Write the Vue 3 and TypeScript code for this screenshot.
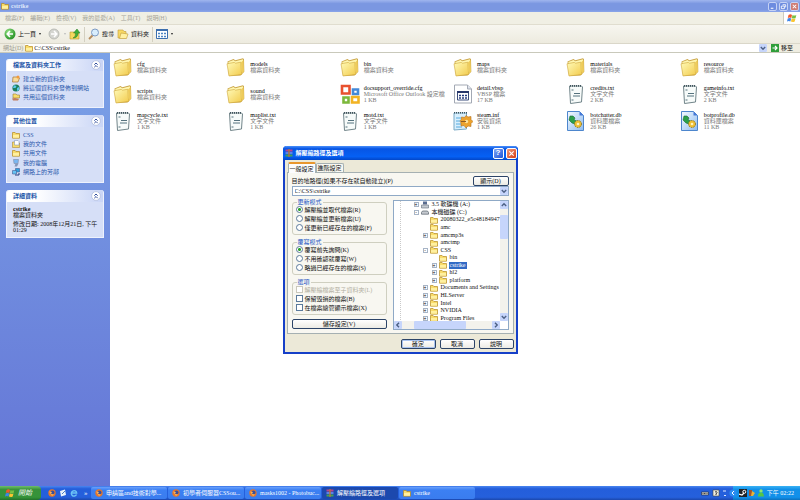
<script setup lang="ts">
import { ref } from 'vue'

interface FileEntry { name: string; kind: string; size?: string; icon: string }
interface TreeNode { name: string; depth: number; icon: string; sign?: '+' | '-' }

const menus = ['檔案(F)', '編輯(E)', '檢視(V)', '我的最愛(A)', '工具(T)', '說明(H)']

const folderTasks = [
  { label: '建立新的資料夾', icon: 'new-folder' },
  { label: '將這個資料夾發佈到網站', icon: 'globe' },
  { label: '共用這個資料夾', icon: 'share' },
]
const places = [
  { label: 'CSS', icon: 'folder' },
  { label: '我的文件', icon: 'docs' },
  { label: '共用文件', icon: 'folder' },
  { label: '我的電腦', icon: 'pc' },
  { label: '網路上的芳鄰', icon: 'network' },
]

const dir = (name: string): FileEntry => ({ name, kind: '檔案資料夾', icon: 'folder-big' })
const txt = (name: string, size: string): FileEntry => ({ name, kind: '文字文件', size, icon: 'text' })

const files: FileEntry[] = [
  dir('cfg'), dir('models'), dir('bin'), dir('maps'), dir('materials'), dir('resource'),
  dir('scripts'), dir('sound'),
  { name: 'docsupport_override.cfg', kind: 'Microsoft Office Outlook 設定檔', size: '1 KB', icon: 'office' },
  { name: 'detail.vbsp', kind: 'VBSP 檔案', size: '17 KB', icon: 'vbsp' },
  txt('credits.txt', '2 KB'), txt('gameinfo.txt', '2 KB'),
  txt('mapcycle.txt', '1 KB'), txt('maplist.txt', '1 KB'), txt('motd.txt', '1 KB'),
  { name: 'steam.inf', kind: '安裝資訊', size: '1 KB', icon: 'inf' },
  { name: 'botchatter.db', kind: '資料庫檔案', size: '26 KB', icon: 'db' },
  { name: 'botprofile.db', kind: '資料庫檔案', size: '11 KB', icon: 'db' },
]

const tree: TreeNode[] = [
  { name: '3.5 軟碟機 (A:)', depth: 0, icon: 'floppy', sign: '+' },
  { name: '本機磁碟 (C:)', depth: 0, icon: 'disk', sign: '-' },
  { name: '20080322_e5c48184947', depth: 1, icon: 'folder' },
  { name: 'amc', depth: 1, icon: 'folder' },
  { name: 'amcmp3s', depth: 1, icon: 'folder', sign: '+' },
  { name: 'amctmp', depth: 1, icon: 'folder' },
  { name: 'CSS', depth: 1, icon: 'folder', sign: '-' },
  { name: 'bin', depth: 2, icon: 'folder' },
  { name: 'cstrike', depth: 2, icon: 'folder', sign: '+' },
  { name: 'hl2', depth: 2, icon: 'folder', sign: '+' },
  { name: 'platform', depth: 2, icon: 'folder', sign: '+' },
  { name: 'Documents and Settings', depth: 1, icon: 'folder', sign: '+' },
  { name: 'HLServer', depth: 1, icon: 'folder', sign: '+' },
  { name: 'Intel', depth: 1, icon: 'folder', sign: '+' },
  { name: 'NVIDIA', depth: 1, icon: 'folder', sign: '+' },
  { name: 'Program Files', depth: 1, icon: 'folder', sign: '+' },
]

const updateModes = ['解壓縮並取代檔案(R)', '解壓縮並更新檔案(U)', '僅更新已經存在的檔案(F)']
const overwriteModes = ['覆寫前先詢問(K)', '不用確認就覆寫(W)', '略過已經存在的檔案(S)']
const options = ref([
  { label: '解壓縮檔案至子資料夾(L)', disabled: true, on: false },
  { label: '保留毀損的檔案(B)', disabled: false, on: false },
  { label: '在檔案總管顯示檔案(X)', disabled: false, on: false },
])
const updateMode = ref(0)
const overwriteMode = ref(0)
const path = ref('C:\\CSS\\cstrike')
const selected = ref('cstrike')

const tasks = [
  { label: '申請區and技術對學...', icon: 'firefox' },
  { label: '初學者伺服器CSSou...', icon: 'firefox' },
  { label: 'masks1002 - Photobuc...', icon: 'firefox' },
  { label: '解壓縮路徑及選項', icon: 'rar', active: true },
  { label: 'cstrike', icon: 'folder' },
]
</script>

<template>
  <div class="desktop">
    <svg class="defs" aria-hidden="true">
      <defs>
        <linearGradient id="gy" x1="0" y1="0" x2="1" y2="1">
          <stop offset="0" stop-color="#fffab8" /><stop offset="1" stop-color="#f2cb4c" />
        </linearGradient>
        <linearGradient id="gb" x1="0" y1="0" x2="1" y2="1">
          <stop offset="0" stop-color="#f4faff" /><stop offset="1" stop-color="#8fbcf0" />
        </linearGradient>
        <radialGradient id="gg" cx=".35" cy=".3" r=".8">
          <stop offset="0" stop-color="#8fe07f" /><stop offset="1" stop-color="#1d8a1d" />
        </radialGradient>
      </defs>
      <symbol id="folder-big" viewBox="0 0 20 20">
        <path d="M1.500 4.500 7.500 2l1.800 1.300L17 1.200l1 1 .3 12.500-3.800 3.800-11.500.5z" fill="#caa548" />
        <path d="M2.300 5 7.500 3l1.800 1.300L17 2.300l.4 12-13 3.200z" fill="#fff6b0" />
        <path d="M1 6.800 8.300 5.400l1.200.8 5.300-1 .8 12.300L3 19z" fill="url(#gy)" stroke="#cfa63a" stroke-width=".6" />
        <path d="m15 5.500 2.500-2.500.4 11.500-2.300 2.800z" fill="#eecb5a" />
      </symbol>
      <symbol id="folder" viewBox="0 0 8 8">
        <path d="M.5 1.500h2.600l.8 1h3.600v4.700h-7z" fill="#f9dc6a" stroke="#b58a22" stroke-width=".7" />
        <path d="M1 4h6v2.700H1z" fill="#fff0a0" />
      </symbol>
      <symbol id="new-folder" viewBox="0 0 8 8">
        <path d="M1 2h5l1.500 1L6 7H.5z" fill="#f9dc9a" stroke="#a87532" stroke-width=".7" />
        <circle cx="6" cy="2" r="1.500" fill="#f29a3c" />
      </symbol>
      <symbol id="globe" viewBox="0 0 8 8">
        <circle cx="4" cy="4" r="3.600" fill="#1d7f5d" />
        <path d="M2 1.200 4.500 2 3.500 4 1 4zM5 4l2-1v3l-2 1z" fill="#5bc8ee" />
      </symbol>
      <symbol id="share" viewBox="0 0 8 8">
        <path d="M1 1h3l1 1h2.500v3H1z" fill="#f9dc6a" stroke="#9b7d34" stroke-width=".6" />
        <path d="M0 5.500 3 5l4 1-1 1.500H1z" fill="#c27d5c" />
      </symbol>
      <symbol id="docs" viewBox="0 0 8 8">
        <path d="M.5 2h2.600l.8 1h3.600v4.500h-7z" fill="#f9dc6a" stroke="#a98938" stroke-width=".6" />
        <path d="M2.500.5H6l1 1V5H2.500z" fill="#fff" stroke="#738bb0" stroke-width=".5" />
      </symbol>
      <symbol id="pc" viewBox="0 0 8 8">
        <path d="M1.500.5h5l-.5 4H2z" fill="#79b7f3" stroke="#8693ae" stroke-width=".7" />
        <path d="M3.500 4.500h3L5 7.500H2.500z" fill="#8497ba" />
      </symbol>
      <symbol id="network" viewBox="0 0 8 8">
        <path d="M3.500.5h4v3.500h-4z" fill="#2fa1dd" stroke="#435a96" stroke-width=".6" />
        <path d="M.5 2.500h4V6h-4z" fill="#66c3f3" stroke="#435a96" stroke-width=".6" />
        <path d="M3 7h4V5" fill="none" stroke="#223a7c" />
      </symbol>
      <symbol id="text" viewBox="0 0 20 20">
        <path d="M3.500 2h12l1 1-1 15-11 1.500z" fill="#f7fbfa" stroke="#72858a" stroke-width="1" />
        <path d="M4 1.800h12" stroke="#40545c" stroke-width="1.800" stroke-dasharray="1 1" />
        <path d="M5.500 6h2M8 9.500h6M7 12h7M5.500 16h2" stroke="#55727e" />
      </symbol>
      <symbol id="office" viewBox="0 0 20 20">
        <g fill="none" stroke-width="2.600">
          <path d="M2 2h7.500v7.500H2z" stroke="#e8512f" /><path d="M13 5.500h5v4.500h-5z" stroke="#4489d8" />
          <path d="M3.500 13.500h5v5h-5z" stroke="#7cb83b" /><path d="M12 13h6.500v5.500H12z" stroke="#f2b322" />
        </g>
      </symbol>
      <symbol id="vbsp" viewBox="0 0 20 20">
        <path d="M1.500 1h13l4 4v14h-17z" fill="#fff" stroke="#a3a9b4" />
        <path d="M14.500 1v4h4" fill="#dfe3ed" stroke="#a3a9b4" />
        <path d="M4.500 7.500h11v8.500h-11z" fill="#fff" stroke="#3a4d7c" />
        <path d="M4 8h12" stroke="#27376b" stroke-width="2" />
        <path d="M6 11.500h8M6 14h8" stroke="#263c80" stroke-width="1.600" stroke-dasharray="2 1" />
      </symbol>
      <symbol id="inf" viewBox="0 0 20 20">
        <path d="M1 2h12.500v16L1 19z" fill="#d8effd" stroke="#78a9c6" />
        <path d="M1 1.800h13" stroke="#40545c" stroke-width="1.600" stroke-dasharray="1 1" />
        <path d="M3 7h5M3 10h4M3 13h5M3 16h6" stroke="#56aade" />
        <path d="m13 4.500 2 1.500 3-.5v3l2 2-2 2v3l-3-.5-2 2-2-2.500-3 .5v-3l-1-2 1.500-2V6l3 .5z" fill="#eda32d" stroke="#b27122" stroke-width=".6" />
        <circle cx="13.500" cy="10.500" r="1.700" fill="#fbe2a0" /><path d="M8 10.500h5" stroke="#8c5a23" />
      </symbol>
      <symbol id="db" viewBox="0 0 20 20">
        <path d="M1.500.5h12l4 4v15h-16z" fill="url(#gb)" stroke="#4d86cd" />
        <path d="M13.500.5v4h4" fill="#4679d8" />
        <path d="m4 5 3 0 2 2-1 2 3 1-2 3-3-1-3-3z" fill="#2ba04a" stroke="#1b6d34" stroke-width=".6" />
        <circle cx="12" cy="13" r="3.500" fill="#eebf35" stroke="#8c781f" stroke-dasharray="1.500 1" />
        <circle cx="12" cy="13" r="1.300" fill="#fff4c0" />
      </symbol>
      <symbol id="floppy" viewBox="0 0 8 8">
        <path d="M2 .5h4v3H2z" fill="#5a6c8f" /><path d="M.5 4h7v3h-7z" fill="#c3c9d0" stroke="#626d78" stroke-width=".6" />
      </symbol>
      <symbol id="disk" viewBox="0 0 8 8">
        <path d="M1.500 3h5l1 1.500v1.700h-7V4.500z" fill="#c5c9cf" stroke="#555e68" stroke-width=".7" />
      </symbol>
      <symbol id="firefox" viewBox="0 0 8 8">
        <circle cx="4" cy="4" r="3.700" fill="#e5762b" /><circle cx="4.500" cy="3.500" r="2" fill="#39509c" />
        <path d="M1 2.500 4 3 3 5l3 .5-2 1.500z" fill="#f7b25c" />
      </symbol>
      <symbol id="rar" viewBox="0 0 8 8">
        <path d="M.5.500h7v2h-7z" fill="#b8458f" /><path d="M.5 3h7v2h-7z" fill="#5b82e6" />
        <path d="M.5 5.500h7v2h-7z" fill="#46a052" /><path d="M3.300 0h1.400v8H3.300z" fill="#b0763c" />
      </symbol>
      <symbol id="flag" viewBox="0 0 10 10">
        <path d="M1.500 2Q3.500.7 5 2L4.300 5Q2.500 4 .8 5z" fill="#f0582c" /><path d="M5.500 2Q7.500 3 9.300 2L8.600 5Q6.700 6 4.800 5z" fill="#78c043" />
        <path d="M.7 5.500Q2.500 4.500 4.200 5.500L3.400 8.500Q1.700 7.500 0 8.500z" fill="#3f86e8" /><path d="M4.700 5.600Q6.700 6.500 8.500 5.500L7.700 8.500Q6 9.500 3.900 8.600z" fill="#fac531" />
      </symbol>
      <symbol id="chevrons" viewBox="0 0 10 10">
        <circle cx="5" cy="5" r="4.400" fill="#fff" stroke="#b3bfdd" stroke-width=".8" />
        <path d="M3.300 4.700 5 3l1.700 1.700M3.300 7.200 5 5.500l1.700 1.700" fill="none" stroke="#324f9c" />
      </symbol>
      <symbol id="down" viewBox="0 0 8 8">
        <path d="m1.800 3 2.200 2.200L6.200 3" fill="none" stroke="#4d6185" stroke-width="1.400" />
      </symbol>
    </svg>

    <header class="titlebar">
      <svg class="ic8"><use href="#folder" /></svg>
      <span class="grow">cstrike</span>
      <button class="cap" aria-label="最小化"><svg viewBox="0 0 8 8"><path d="M2 6h3" stroke="#fff" stroke-width="1.200" /></svg></button>
      <button class="cap" aria-label="還原"><svg viewBox="0 0 8 8"><path d="M3 2h3.500v3M1.500 3.500H5v3H1.500z" fill="none" stroke="#fff" /></svg></button>
      <button class="cap close" aria-label="關閉"><svg viewBox="0 0 8 8"><path d="m2 2 4 4M6 2 2 6" stroke="#fff" stroke-width="1.200" /></svg></button>
    </header>

    <nav class="menubar">
      <button v-for="m in menus" :key="m">{{ m }}</button>
      <span class="brand"><svg class="ic10"><use href="#flag" /></svg></span>
    </nav>

    <div class="toolbar">
      <button>
        <svg class="ic12" viewBox="0 0 12 12"><circle cx="6" cy="6" r="5.500" fill="url(#gg)" /><path d="M9 6H3.500M6 3 3.200 6 6 9" fill="none" stroke="#fff" stroke-width="1.600" /></svg>
        上一頁<i class="tri"></i>
      </button>
      <button aria-label="下一頁" class="fwd">
        <svg class="ic12" viewBox="0 0 12 12"><circle cx="6" cy="6" r="5" fill="#d4d5d0" stroke="#a9aba5" stroke-width=".7" /><path d="M3 6h5.500M6 3l2.800 3L6 9" fill="none" stroke="#fff" stroke-width="1.500" /></svg>
        <i class="tri faint"></i>
      </button>
      <button aria-label="往上">
        <svg class="ic12" viewBox="0 0 12 12"><path d="M1 4h4l1 1h4v6H1z" fill="#f6d75e" stroke="#b99a35" stroke-width=".6" /><path d="M4 10q3-1 2.500-5H4.500L8 1l3 4H9q0 5-5 5z" fill="#3fae38" stroke="#237a20" stroke-width=".5" /></svg>
      </button>
      <span class="vsep"></span>
      <button>
        <svg class="ic12" viewBox="0 0 12 12"><path d="m1 11 4-4" stroke="#b58b5b" stroke-width="1.800" /><circle cx="7" cy="4.500" r="3.500" fill="#d8edfc" stroke="#7d9bc4" /></svg>
        搜尋
      </button>
      <button>
        <svg class="ic12" viewBox="0 0 12 12"><path d="M1 2h5l1 1.500h2V10H1z" fill="#f8d964" stroke="#c09a38" stroke-width=".6" /><path d="m4 5 7 1-1.500 4.500H2.500z" fill="#fff0a2" stroke="#c09a38" stroke-width=".6" /></svg>
        資料夾
      </button>
      <span class="vsep"></span>
      <button aria-label="檢視">
        <svg class="ic12" viewBox="0 0 12 12"><path d="M.5 1.500h11v9H.5z" fill="#fff" stroke="#3c6fae" /><path d="M0 2h12" stroke="#3c6fae" stroke-width="2" /><path d="M2 5.500h8M2 8.500h8" stroke="#4e86c4" stroke-width="1.600" stroke-dasharray="2 1" /></svg>
        <i class="tri"></i>
      </button>
    </div>

    <div class="address">
      <label for="addr">網址(D)</label>
      <div class="addr-box">
        <svg class="ic8"><use href="#folder" /></svg>
        <input id="addr" type="text" value="C:\CSS\cstrike" />
        <button class="drop" aria-label="展開"><svg class="ic8"><use href="#down" /></svg></button>
      </div>
      <button class="go">
        <svg class="ic8" viewBox="0 0 8 8"><path d="M0 0h8v8H0z" fill="#2f9e3a" /><path d="M1.500 4h4M4 2l2 2-2 2" fill="none" stroke="#fff" stroke-width="1.200" /></svg>
        移至
      </button>
    </div>

    <main class="body">
      <aside class="side">
        <section class="panel">
          <h2>檔案及資料夾工作<svg class="ic10"><use href="#chevrons" /></svg></h2>
          <ul class="links three">
            <li v-for="t in folderTasks" :key="t.label"><svg class="ic8"><use :href="'#' + t.icon" /></svg><a href="#">{{ t.label }}</a></li>
          </ul>
        </section>
        <section class="panel">
          <h2>其他位置<svg class="ic10"><use href="#chevrons" /></svg></h2>
          <ul class="links five">
            <li v-for="t in places" :key="t.label"><svg class="ic8"><use :href="'#' + t.icon" /></svg><a href="#">{{ t.label }}</a></li>
          </ul>
        </section>
        <section class="panel">
          <h2>詳細資料<svg class="ic10"><use href="#chevrons" /></svg></h2>
          <div class="details">
            <p><b>cstrike</b><br />檔案資料夾</p>
            <p>修改日期: 2008年12月21日, 下午 01:29</p>
          </div>
        </section>
      </aside>

      <ul class="files">
        <li v-for="f in files" :key="f.name">
          <svg class="ic20"><use :href="'#' + f.icon" /></svg>
          <div>
            <div class="name">{{ f.name }}</div>
            <div>{{ f.kind }}</div>
            <div v-if="f.size">{{ f.size }}</div>
          </div>
        </li>
      </ul>
    </main>

    <footer class="taskbar">
      <button class="start"><svg class="ic10"><use href="#flag" /></svg>開始</button>
      <div class="quick">
        <svg class="ic8"><use href="#firefox" /></svg>
        <svg class="ic8" viewBox="0 0 8 8"><path d="M1 2 6 .5 7 6 2 7.500z" fill="#e9f2fb" /><path d="m3 5 3-3" stroke="#4c80c0" /></svg>
        <svg class="ic8" viewBox="0 0 8 8"><path d="M6.500 5.500A2.700 2.700 0 1 1 6.700 4H2" fill="none" stroke="#6cc4f6" stroke-width="1.400" /></svg>
        <span class="more">»</span>
      </div>
      <div class="tasks">
        <button v-for="t in tasks" :key="t.label" :class="{ active: t.active }">
          <svg class="ic8"><use :href="'#' + t.icon" /></svg><span>{{ t.label }}</span>
        </button>
      </div>
      <div class="lang">
        <svg class="ic8" viewBox="0 0 8 8"><path d="M.5 3h7v3h-7z" fill="#d7d3c4" stroke="#20305a" stroke-width=".7" /><path d="M1.500 4.500h5" stroke="#444" stroke-dasharray="1 .5" /></svg>
        <svg class="ic8" viewBox="0 0 8 8"><path d="M1 1h6v6H1z" fill="#f1efe2" stroke="#444" stroke-width=".6" /><path d="M3 3q2-1 2 .5L4 5v1" fill="none" stroke="#333" /></svg>
        <svg class="ic4" viewBox="0 0 4 8"><path d="M0 2h3M1 6l1 1 1-1" fill="none" stroke="#dce8ff" /></svg>
      </div>
      <div class="tray">
        <svg class="ic8 hide" viewBox="0 0 8 8"><circle cx="4" cy="4" r="3.600" fill="#2b8cf0" /><path d="M5 2 3 4l2 2" fill="none" stroke="#fff" /></svg>
        <svg class="ic8" viewBox="0 0 8 8"><path d="M0 0h8v8H0z" fill="#202327" /><circle cx="5.300" cy="2.800" r="1.500" fill="none" stroke="#fff" /><path d="m0 5 3 1 2-2" fill="none" stroke="#fff" stroke-width="1.200" /></svg>
        <svg class="ic8" viewBox="0 0 8 8"><path d="M1 1h3v6H1z" fill="#a4532c" /><path d="m4 2 3 2-2 3H3z" fill="#e5b43a" /></svg>
        <svg class="ic8" viewBox="0 0 8 8"><circle cx="4" cy="2" r="1.700" fill="#8fe36e" /><path d="M1 7.500q0-4 3-4t3 4z" fill="#54c546" /></svg>
        <time>下午 02:22</time>
      </div>
    </footer>

    <div class="overlay">
      <form class="dialog" role="dialog" aria-labelledby="dlg-title" @submit.prevent>
        <div class="dlg-title">
          <svg class="ic8"><use href="#rar" /></svg>
          <span id="dlg-title" class="grow">解壓縮路徑及選項</span>
          <button type="button" class="cap big" aria-label="求助">?</button>
          <button type="button" class="cap big close" aria-label="關閉"><svg viewBox="0 0 8 8"><path d="m1.500 1.500 5 5M6.500 1.500l-5 5" stroke="#fff" stroke-width="1.300" /></svg></button>
        </div>
        <div class="dlg-body">
          <div class="tabs" role="tablist">
            <button type="button" role="tab" class="on">一般設定</button>
            <button type="button" role="tab">進階設定</button>
          </div>
          <div class="page">
            <div class="path-row">
              <label for="dest">目的地路徑(如果不存在就自動建立)(P)</label>
              <button type="button" class="btn">顯示(D)</button>
            </div>
            <div class="combo">
              <input id="dest" v-model="path" type="text" />
              <button type="button" class="drop" aria-label="展開"><svg class="ic8"><use href="#down" /></svg></button>
            </div>
            <div class="cols">
              <div class="left">
                <fieldset>
                  <legend>更新模式</legend>
                  <label v-for="(m, i) in updateModes" :key="m"><input v-model="updateMode" type="radio" name="update" :value="i" />{{ m }}</label>
                </fieldset>
                <fieldset>
                  <legend>覆寫模式</legend>
                  <label v-for="(m, i) in overwriteModes" :key="m"><input v-model="overwriteMode" type="radio" name="overwrite" :value="i" />{{ m }}</label>
                </fieldset>
                <fieldset>
                  <legend>選項</legend>
                  <label v-for="o in options" :key="o.label" :class="{ off: o.disabled }"><input v-model="o.on" type="checkbox" :disabled="o.disabled" />{{ o.label }}</label>
                </fieldset>
                <button type="button" class="btn">儲存設定(V)</button>
              </div>
              <div class="tree-box">
                <div class="tree-view">
                  <ul class="tree">
                    <li v-for="n in tree" :key="n.name" :class="'d' + n.depth">
                      <span class="sign" :class="{ box: n.sign }">{{ n.sign }}</span>
                      <svg class="ic8"><use :href="'#' + n.icon" /></svg>
                      <span class="node" :class="{ sel: n.name === selected }" @click="selected = n.name">{{ n.name }}</span>
                    </li>
                  </ul>
                </div>
                <div class="vbar">
                  <button type="button" class="drop" aria-label="向上"><svg class="ic8 up"><use href="#down" /></svg></button>
                  <span class="thumb"></span>
                  <button type="button" class="drop" aria-label="向下"><svg class="ic8"><use href="#down" /></svg></button>
                </div>
                <div class="hbar">
                  <button type="button" class="drop" aria-label="向左"><svg class="ic8 lf"><use href="#down" /></svg></button>
                  <span class="thumb"></span>
                  <button type="button" class="drop" aria-label="向右"><svg class="ic8 rt"><use href="#down" /></svg></button>
                </div>
              </div>
            </div>
          </div>
          <div class="actions">
            <button type="submit" class="btn default">確定</button>
            <button type="button" class="btn">取消</button>
            <button type="button" class="btn">說明</button>
          </div>
        </div>
      </form>
    </div>
  </div>
</template>

<style>
body { margin: 0; }
</style>

<style scoped>
.desktop {
  position: relative;
  display: flex;
  flex-direction: column;
  min-height: 100vh;
  background: #fff;
  color: #111;
  font: 6px/6px "Liberation Serif", "Noto Sans CJK TC", serif;
}
.desktop *, .desktop { box-sizing: border-box; }
.defs { position: absolute; width: 0; height: 0; }
svg { display: block; flex: none; }
.ic4 { width: 4px; height: 8px; }
.ic8 { width: 8px; height: 8px; }
.ic10 { width: 10px; height: 10px; }
.ic12 { width: 12px; height: 12px; }
.ic20 { width: 20px; height: 20px; }
button, input { font: inherit; color: inherit; margin: 0; padding: 0; border: 0; background: none; }
button { display: flex; align-items: center; white-space: nowrap; }
input[type="text"] { flex: 1; min-width: 0; height: 8px; outline: 0; }
ul, p, h2, fieldset { margin: 0; padding: 0; list-style: none; }
a { color: inherit; text-decoration: none; }
.grow { flex: 1; }

.titlebar {
  display: flex;
  align-items: center;
  gap: 2px;
  height: 12px;
  padding: 0 1px;
  background: linear-gradient(#a0b6ee, #7b97e1 30%, #7b97e1 80%, #8ba6ea);
  color: #dfe7fb;
  font-weight: bold;
}
.cap {
  justify-content: center;
  width: 9px;
  height: 9px;
  border: 1px solid #c5d2f5;
  border-radius: 2px;
  background: #6d8ce0;
  color: #fff;
  font: bold 8px/8px "Liberation Sans", sans-serif;
}
.cap svg { width: 7px; height: 7px; }
.cap.close { background: #cf7c74; }
.cap.big { width: 11px; height: 11px; border-color: #fff; background: linear-gradient(135deg, #7fa4f5, #1f56d8); }
.cap.big.close { background: linear-gradient(135deg, #f09a7c, #d53f16); }

.menubar { display: flex; align-items: stretch; gap: 6px; height: 12px; padding-left: 5px; background: #f0efe4; color: #a5a498; }
.brand { display: flex; align-items: center; justify-content: center; width: 17px; margin-left: auto; background: #fff; border-left: 1px solid #d0cdbd; }
.toolbar { display: flex; align-items: center; gap: 3px; height: 19px; padding: 0 4px; background: linear-gradient(#f7f6f0, #edebdf); border-top: 1px solid #e0ddcf; }
.toolbar button { gap: 2px; }
.toolbar .fwd { margin-left: 4px; }
.vsep { width: 1px; height: 15px; background: #d3d0c1; }
.tri { border: 1px solid transparent; border-top: 2px solid #222; border-bottom: 0; margin-left: 1px; }
.tri.faint { border-top-color: #bbb; margin-left: 2px; }

.address { display: flex; align-items: center; gap: 2px; height: 10px; padding: 0 3px; background: #efede1; border-top: 1px solid #dad7c9; border-bottom: 1px solid #c9c9bb; }
.address label { color: #9b9a90; }
.addr-box { display: flex; align-items: center; gap: 1px; flex: 1; background: #fff; }
.drop { justify-content: center; width: 8px; height: 8px; border-radius: 1px; background: #c6d5fb; }
.go { gap: 2px; width: 26px; margin-left: 2px; }

.body { display: flex; flex: 1; }
.side { display: flex; flex-direction: column; gap: 7px; width: 110px; padding: 6px; background: linear-gradient(#7ba2e7, #6475d6); }
.panel { background: #d6dff7; border: 1px solid #eef2fd; border-top: 0; border-radius: 3px 3px 0 0; color: #2b58ac; }
.panel h2 { display: flex; align-items: center; justify-content: space-between; height: 12px; padding: 0 2px 0 6px; border-radius: 3px 3px 0 0; background: linear-gradient(90deg, #fff 30%, #c9d5f6); font-size: 6px; color: #2456a8; }
.links { display: grid; padding: 0 5px; margin: 3px 0 5px; }
.three { height: 28px; }
.five { height: 47px; }
.links li { display: flex; align-items: center; gap: 3px; white-space: nowrap; }
.details { display: grid; gap: 3px; padding: 4px 1px 4px 6px; color: #111; word-break: keep-all; }

.files { flex: 1; display: grid; grid-template-columns: repeat(auto-fill, minmax(110px, 1fr)); grid-auto-rows: 27px; padding: 0 7px 0 3px; }
.files li { display: flex; align-items: center; gap: 4px; color: #777; white-space: nowrap; }
.name { color: #000; }

.taskbar { display: flex; height: 14px; background: linear-gradient(#4a86f0, #245edb 20%, #2560dc 80%, #1b47ac); color: #fff; }
.start { gap: 3px; width: 41px; padding-left: 5px; border-radius: 0 4px 4px 0; background: linear-gradient(#6fbf6b, #38913a 25%, #35943a 80%, #23702a); font-style: italic; font-size: 7px; }
.quick { display: flex; align-items: center; gap: 3px; width: 50px; padding-left: 7px; }
.more { font-size: 7px; margin-left: 3px; }
.tasks { display: flex; align-items: center; gap: 1px; flex: 1; min-width: 0; }
.tasks button { gap: 3px; width: 76px; height: 12px; padding: 0 4px; border-radius: 2px; background: linear-gradient(#69a0fb, #3c80f3 25%, #3a7cee); overflow: hidden; }
.tasks button.active { background: #1c49ae; }
.lang { display: flex; align-items: center; gap: 3px; padding-right: 6px; }
.tray { display: flex; align-items: center; gap: 1px; padding: 0 6px 0 0; background: linear-gradient(#39b2f4, #1290e8 25%, #1190ea 80%, #0d71bd); }
.hide { margin-left: -4px; margin-right: 1px; }
.tray time { margin-left: 1px; white-space: nowrap; }

.overlay { position: absolute; inset: 0; display: flex; align-items: center; justify-content: center; pointer-events: none; }
.dialog { width: 235px; border: 2px solid #1640c8; border-top: 0; border-radius: 4px 4px 0 0; background: #ece9d8; pointer-events: auto; }
.dlg-title { display: flex; align-items: center; gap: 2px; height: 14px; padding: 0 1px; margin: 0 -2px; border-radius: 4px 4px 0 0; background: linear-gradient(#4a90fb, #0755e4 20%, #0560f4 75%, #0346c8); color: #fff; font-weight: bold; }
.dlg-title > .ic8 { margin: 0 1px; }
.dlg-body { padding: 2px 2px 3px; }
.tabs { display: flex; align-items: flex-end; padding: 0 1px; }
.tabs button { justify-content: center; width: 28px; height: 9px; border: 1px solid #a5b0b2; border-bottom: 0; border-radius: 2px 2px 0 0; background: #f8f7f2; }
.tabs .on { height: 11px; border-top: 2px solid #e9972e; background: #fcfcfe; margin-bottom: -1px; }
.page { display: flex; flex-direction: column; padding: 3px 4px; border: 1px solid #a5b0b2; background: #f8f7f1; }
.path-row { display: flex; align-items: center; justify-content: space-between; height: 10px; }
.path-row .btn { width: 36px; }
.btn { justify-content: center; height: 10px; border: 1px solid #2c4468; border-radius: 2px; background: linear-gradient(#fff, #ecebe4); }
.btn.default { box-shadow: inset 0 0 0 1px #a9c3f0; }
.combo { display: flex; align-items: center; height: 10px; padding-left: 2px; border: 1px solid #8fa9c6; background: #fff; }
.cols { display: flex; gap: 6px; margin-top: 3px; }
.left { width: 95px; display: flex; flex-direction: column; gap: 4px; }
.left fieldset { display: flex; flex-direction: column; min-width: 0; padding: 0 3px 2px; border: 1px solid #cfcfc0; border-radius: 3px; }
.left legend { margin-left: 1px; padding: 0 1px; color: #2456c4; line-height: 6px; }
.left label { display: flex; align-items: center; gap: 2px; height: 9px; white-space: nowrap; }
.left label.off { color: #b1ae9f; }
.left input { appearance: none; width: 7px; height: 7px; flex: none; border: 1px solid #5b7a9c; background: #fff; }
.left input[type="radio"] { border-radius: 50%; }
.left input[type="radio"]:checked { background: radial-gradient(circle, #26a126 1px, #fff 2px); }
.left .off input { border-color: #cac8bb; }
.tree-box { flex: 1; min-width: 0; display: grid; grid-template-columns: 1fr 8px; grid-template-rows: 120px 8px; margin-top: 1px; border: 1px solid #8fa9c6; background: #fff; }
.tree-view { overflow: hidden; }
.tree { display: flex; flex-direction: column; height: 121px; margin-left: 6px; padding-left: 13px; border-left: 1px dotted #c9c9c9; }
.tree li { flex: 1; min-height: 0; display: flex; align-items: center; gap: 2px; white-space: nowrap; }
.tree .d1 { padding-left: 9px; }
.tree .d2 { padding-left: 18px; }
.sign { flex: none; width: 5px; height: 5px; font: 5px/3px "Liberation Sans", sans-serif; text-align: center; }
.sign.box { border: 1px solid #a7b4c6; }
.node { padding: 0 1px; line-height: 7px; }
.node.sel { background: #316ac5; color: #fff; }
.vbar, .hbar { display: flex; background: #f3f2ec; }
.vbar { flex-direction: column; }
.vbar .drop:last-child { margin-top: auto; }
.hbar .drop:last-child { margin-left: auto; }
.thumb { background: #c6d5fb; border-radius: 1px; }
.vbar .thumb { height: 24px; margin-top: 6px; }
.hbar .thumb { width: 52px; margin-left: 12px; }
.up { transform: rotate(180deg); }
.lf { transform: rotate(90deg); }
.rt { transform: rotate(-90deg); }
.actions { display: flex; justify-content: flex-end; gap: 4px; padding-top: 5px; }
.actions .btn { width: 35px; }
</style>
